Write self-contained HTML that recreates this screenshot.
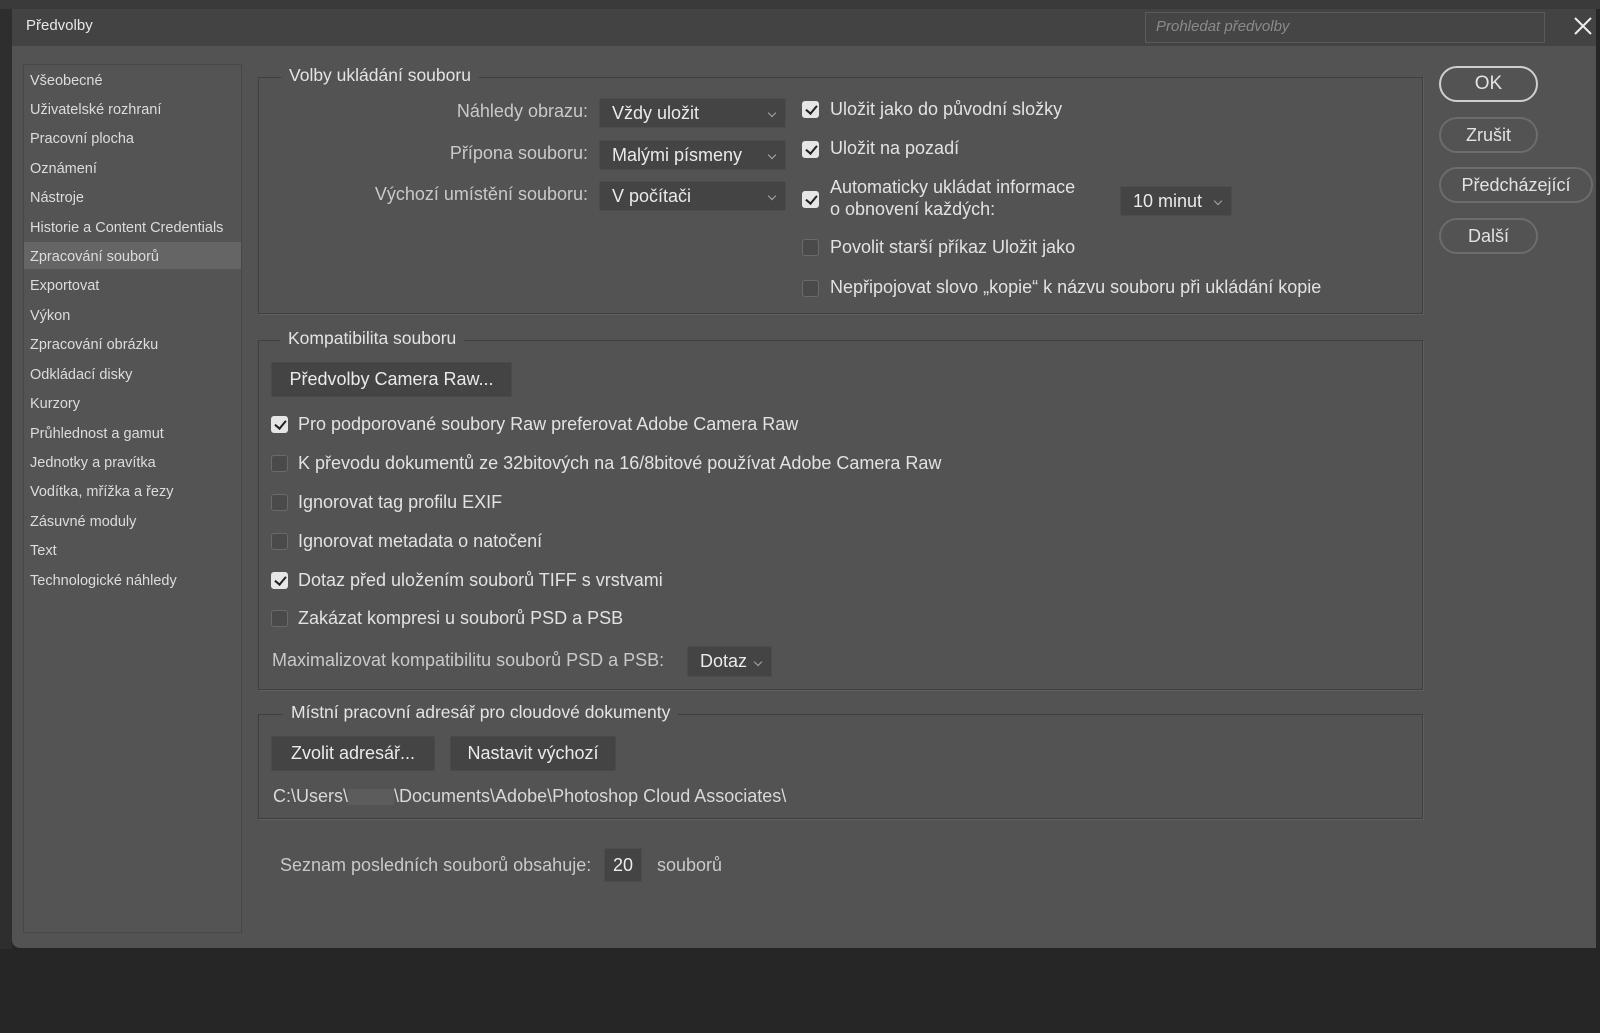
<!DOCTYPE html>
<html><head><meta charset="utf-8"><style>
*{box-sizing:border-box;margin:0;padding:0}
body{width:1600px;height:1033px;background:#262626;position:relative;overflow:hidden;font-family:"Liberation Sans",sans-serif;color:#dedede}
.a{position:absolute;white-space:nowrap}
#top{left:0;top:0;width:1600px;height:9px;background:#3a3a3a}
#leftstrip{left:0;top:9px;width:12px;height:940px;background:#2e2e2e}
#dlg{left:12px;top:9px;width:1584px;height:939px;background:#535353;border-radius:0 0 0 8px}
#tb{left:12px;top:9px;width:1584px;height:37px;background:#434343}
.sb{left:23px;top:64px;width:219px;height:869px;border:1px solid #474747;background:#545454}
.si{left:30px;font-size:14.5px;color:#dcdcdc}
.sel{left:24px;top:242px;width:217px;height:27px;background:#656565}
.grp{border:1px solid #3f3f3f;box-shadow:1px 1px 0 #5f5f5f}
.gt{font-size:17.5px;background:#535353;padding:0 8px;color:#e4e4e4}
.t{font-size:18px;color:#e2e2e2}
.lbl{font-size:18px;color:#c9c9c9;text-align:right}
.dd{background:#444;border:1px solid #4c4c4c;border-radius:2px;font-size:18px;color:#eaeaea;padding-left:12px}
.dd:after{content:"";position:absolute;right:10px;top:50%;width:5px;height:5px;border-right:1px solid #aaa;border-bottom:1px solid #aaa;transform:translateY(-3px) rotate(45deg)}
.cb{width:17px;height:17px;border-radius:3px;background:#4a4a4a;border:1px solid #6a6a6a}
.cb.on{background:#e6e6e6;border-color:#e6e6e6}
.cb.on:after{content:"";position:absolute;left:5px;top:1px;width:5px;height:9px;border-right:2.5px solid #222;border-bottom:2.5px solid #222;transform:rotate(40deg)}
.btn{background:#444;border:1px solid #4a4a4a;border-radius:2px;font-size:18px;color:#eaeaea;text-align:center}
.rb{border:2px solid #6c6c6c;border-radius:18px;font-size:18px;color:#e2e2e2;text-align:center;line-height:32px}
</style></head><body>
<div class="a" id="top"></div>
<div class="a" id="leftstrip"></div>
<div class="a" id="dlg"></div>
<div class="a" id="tb"></div>
<div class="a" style="left:26px;top:17px;font-size:15px;color:#e8e8e8">Předvolby</div>
<div class="a" style="left:1145px;top:12px;width:400px;height:31px;border:1px solid #5a5a5a;background:#454545"></div>
<div class="a" style="left:1156px;top:18px;font-size:15px;font-style:italic;color:#8a8a8a">Prohledat předvolby</div>
<svg class="a" style="left:1574px;top:17px" width="18" height="18"><path d="M1 1L17 17M17 1L1 17" stroke="#eee" stroke-width="2"/></svg>

<div class="a sb"></div>
<div class="a sel"></div>
<div class="a si" style="top:73px">Všeobecné</div>
<div class="a si" style="top:102px">Uživatelské rozhraní</div>
<div class="a si" style="top:131px">Pracovní plocha</div>
<div class="a si" style="top:161px">Oznámení</div>
<div class="a si" style="top:190px">Nástroje</div>
<div class="a si" style="top:220px">Historie a Content Credentials</div>
<div class="a si" style="top:249px">Zpracování souborů</div>
<div class="a si" style="top:278px">Exportovat</div>
<div class="a si" style="top:308px">Výkon</div>
<div class="a si" style="top:337px">Zpracování obrázku</div>
<div class="a si" style="top:367px">Odkládací disky</div>
<div class="a si" style="top:396px">Kurzory</div>
<div class="a si" style="top:426px">Průhlednost a gamut</div>
<div class="a si" style="top:455px">Jednotky a pravítka</div>
<div class="a si" style="top:484px">Vodítka, mřížka a řezy</div>
<div class="a si" style="top:514px">Zásuvné moduly</div>
<div class="a si" style="top:543px">Text</div>
<div class="a si" style="top:573px">Technologické náhledy</div>

<div class="a grp" style="left:258px;top:77px;width:1165px;height:237px"></div>
<div class="a gt" style="left:281px;top:65px">Volby ukládání souboru</div>
<div class="a lbl" style="left:300px;width:288px;top:101px">Náhledy obrazu:</div>
<div class="a lbl" style="left:300px;width:288px;top:143px">Přípona souboru:</div>
<div class="a lbl" style="left:300px;width:288px;top:184px">Výchozí umístění souboru:</div>
<div class="a dd" style="left:599px;top:98px;width:187px;height:30px;line-height:28px">Vždy uložit</div>
<div class="a dd" style="left:599px;top:140px;width:187px;height:30px;line-height:28px">Malými písmeny</div>
<div class="a dd" style="left:599px;top:181px;width:187px;height:30px;line-height:28px">V počítači</div>
<div class="a cb on" style="left:802px;top:101px"></div>
<div class="a t" style="left:830px;top:99px">Uložit jako do původní složky</div>
<div class="a cb on" style="left:802px;top:141px"></div>
<div class="a t" style="left:830px;top:138px">Uložit na pozadí</div>
<div class="a cb on" style="left:802px;top:191px"></div>
<div class="a t" style="left:830px;top:176px;line-height:22px">Automaticky ukládat informace<br>o obnovení každých:</div>
<div class="a dd" style="left:1120px;top:186px;width:112px;height:30px;line-height:28px">10 minut</div>
<div class="a cb" style="left:802px;top:239px"></div>
<div class="a t" style="left:830px;top:237px">Povolit starší příkaz Uložit jako</div>
<div class="a cb" style="left:802px;top:280px"></div>
<div class="a t" style="left:830px;top:277px">Nepřipojovat slovo „kopie“ k názvu souboru při ukládání kopie</div>

<div class="a rb" style="left:1439px;top:66px;width:99px;height:36px;border-color:#cfcfcf;font-size:19px">OK</div>
<div class="a rb" style="left:1439px;top:117px;width:99px;height:36px">Zrušit</div>
<div class="a rb" style="left:1439px;top:167px;width:154px;height:36px">Předcházející</div>
<div class="a rb" style="left:1439px;top:218px;width:99px;height:36px">Další</div>

<div class="a grp" style="left:258px;top:340px;width:1165px;height:350px"></div>
<div class="a gt" style="left:280px;top:328px">Kompatibilita souboru</div>
<div class="a btn" style="left:271px;top:362px;width:241px;height:35px;line-height:33px">Předvolby Camera Raw...</div>
<div class="a cb on" style="left:271px;top:416px"></div>
<div class="a t" style="left:298px;top:414px">Pro podporované soubory Raw preferovat Adobe Camera Raw</div>
<div class="a cb" style="left:271px;top:455px"></div>
<div class="a t" style="left:298px;top:453px">K převodu dokumentů ze 32bitových na 16/8bitové používat Adobe Camera Raw</div>
<div class="a cb" style="left:271px;top:494px"></div>
<div class="a t" style="left:298px;top:492px">Ignorovat tag profilu EXIF</div>
<div class="a cb" style="left:271px;top:533px"></div>
<div class="a t" style="left:298px;top:531px">Ignorovat metadata o natočení</div>
<div class="a cb on" style="left:271px;top:572px"></div>
<div class="a t" style="left:298px;top:570px">Dotaz před uložením souborů TIFF s vrstvami</div>
<div class="a cb" style="left:271px;top:610px"></div>
<div class="a t" style="left:298px;top:608px">Zakázat kompresi u souborů PSD a PSB</div>
<div class="a lbl" style="left:272px;top:650px;text-align:left">Maximalizovat kompatibilitu souborů PSD a PSB:</div>
<div class="a dd" style="left:687px;top:646px;width:85px;height:31px;line-height:29px">Dotaz</div>

<div class="a grp" style="left:258px;top:714px;width:1165px;height:105px"></div>
<div class="a gt" style="left:283px;top:702px">Místní pracovní adresář pro cloudové dokumenty</div>
<div class="a btn" style="left:271px;top:736px;width:164px;height:35px;line-height:33px">Zvolit adresář...</div>
<div class="a btn" style="left:450px;top:736px;width:166px;height:35px;line-height:33px">Nastavit výchozí</div>
<div class="a t" style="left:273px;top:786px;color:#d8d8d8">C:\Users\<span style="display:inline-block;width:46px;height:16px;background:#5c5c5c;vertical-align:middle"></span>\Documents\Adobe\Photoshop Cloud Associates\</div>

<div class="a lbl" style="left:280px;top:855px;text-align:left">Seznam posledních souborů obsahuje:</div>
<div class="a" style="left:604px;top:848px;width:38px;height:34px;background:#444;border:1px solid #4c4c4c;font-size:18px;color:#eee;text-align:center;line-height:32px">20</div>
<div class="a lbl" style="left:657px;top:855px;text-align:left">souborů</div>
</body></html>
